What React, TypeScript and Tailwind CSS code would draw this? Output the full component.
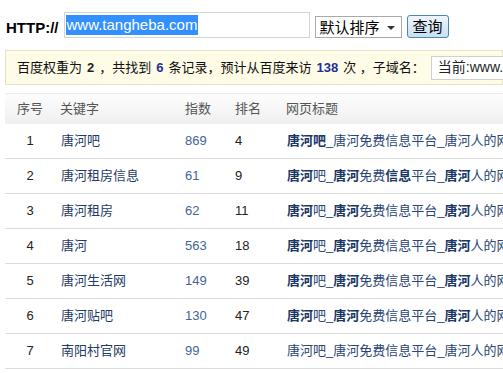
import React from "react";

type Seg = { t: string; b?: boolean };

const rows: { n: number; k: string; idx: string; rank: string; title: Seg[] }[] = [
  {
    n: 1,
    k: "唐河吧",
    idx: "869",
    rank: "4",
    title: [{ t: "唐河吧", b: true }, { t: "_唐河免费信息平台_唐河人的网上家园" }],
  },
  {
    n: 2,
    k: "唐河租房信息",
    idx: "61",
    rank: "9",
    title: [
      { t: "唐河", b: true },
      { t: "吧_" },
      { t: "唐河", b: true },
      { t: "免费" },
      { t: "信息", b: true },
      { t: "平台_" },
      { t: "唐河", b: true },
      { t: "人的网上家园" },
    ],
  },
  ...[
    { n: 3, k: "唐河租房", idx: "62", rank: "11" },
    { n: 4, k: "唐河", idx: "563", rank: "18" },
    { n: 5, k: "唐河生活网", idx: "149", rank: "39" },
    { n: 6, k: "唐河贴吧", idx: "130", rank: "47" },
  ].map((r) => ({
    ...r,
    title: [
      { t: "唐河", b: true },
      { t: "吧_" },
      { t: "唐河", b: true },
      { t: "免费信息平台_" },
      { t: "唐河", b: true },
      { t: "人的网上家园" },
    ] as Seg[],
  })),
  {
    n: 7,
    k: "南阳村官网",
    idx: "99",
    rank: "49",
    title: [{ t: "唐河吧_唐河免费信息平台_唐河人的网上家园" }],
  },
];

const font = { fontFamily: '"Liberation Sans", Arial, "Noto Sans CJK SC", sans-serif' };

export default function App() {
  return (
    <div
      className="w-[503px] h-[373px] overflow-hidden bg-white text-[13px] text-[#222]"
      style={font}
    >
      {/* top search bar */}
      <div className="flex items-center pl-[6px] pt-[12px] h-[38px] whitespace-nowrap">
        <span className="text-[15px] font-bold text-black leading-none mt-[4px]">HTTP://</span>
        <div className="ml-[5px] w-[246px] h-[26px] border border-[#d4d4d4] bg-white flex items-center pl-[1px]">
          <span className="bg-[#3390ff] text-white text-[15px] leading-[20px] px-[1px]">
            www.tangheba.com
          </span>
        </div>
        <div className="ml-[5px] mt-[4px] w-[87px] h-[22px] border border-[#a9a9a9] bg-white flex items-center pl-[4px] relative">
          <span className="text-[15px] leading-none text-black">默认排序</span>
          <span className="absolute right-[6px] top-[9px] w-0 h-0 border-l-[4px] border-r-[4px] border-t-[4px] border-l-transparent border-r-transparent border-t-[#333]" />
        </div>
        <button className="ml-[5px] mt-[2px] w-[42px] h-[23px] rounded-[3px] border border-[#4f86ad] bg-gradient-to-b from-[#eef6fc] to-[#c6dff1] text-[15px] leading-none text-black flex items-center justify-center">
          查询
        </button>
      </div>

      {/* notice */}
      <div className="ml-[5px] mt-[12px] h-[35px] border border-[#e8e2c8] bg-[#fefbe7] flex items-center pl-[11px] whitespace-nowrap text-[13px] text-[#111]">
        <span>百度权重为 </span>
        <b className="mx-[5px] text-[#222]">2</b>
        <span>，共找到 </span>
        <b className="mx-[5px] text-[#1d2f9a]">6</b>
        <span>条记录，预计从百度来访 </span>
        <b className="mx-[5px] text-[#1d2f9a]">138</b>
        <span>次 ，子域名：</span>
        <div className="ml-[6px] h-[24px] w-[120px] border border-[#d0d0d0] bg-white flex items-center pl-[6px] text-[14px] text-[#222]">
          当前:www.tangheba.com
        </div>
      </div>

      {/* table */}
      <div className="ml-[5px] mt-[8px] w-[600px]">
        <div className="flex h-[31px] items-center bg-gradient-to-b from-[#fdfdfd] to-[#efefef] border-t border-[#ececec] text-[#555]">
          <div className="w-[50px] text-center">序号</div>
          <div className="w-[125px] pl-[5px]">关键字</div>
          <div className="w-[50px] pl-[5px]">指数</div>
          <div className="w-[51px] pl-[5px]">排名</div>
          <div className="pl-[5px]">网页标题</div>
        </div>
        {rows.map((r) => (
          <div
            key={r.n}
            className="flex h-[35px] items-center border-b border-[#dcdcdc] whitespace-nowrap"
          >
            <div className="w-[50px] text-center text-[#222]">{r.n}</div>
            <div className="w-[125px] pl-[6px] text-[#1f3b66]">{r.k}</div>
            <div className="w-[50px] pl-[5px] text-[#43659a]">{r.idx}</div>
            <div className="w-[51px] pl-[5px] text-[#222]">{r.rank}</div>
            <div className="pl-[6px] text-[#2a4672]">
              {r.title.map((s, i) =>
                s.b ? (
                  <b key={i} className="font-bold text-[#1a3765]">
                    {s.t}
                  </b>
                ) : (
                  <span key={i}>{s.t}</span>
                )
              )}
            </div>
          </div>
        ))}
      </div>
    </div>
  );
}
